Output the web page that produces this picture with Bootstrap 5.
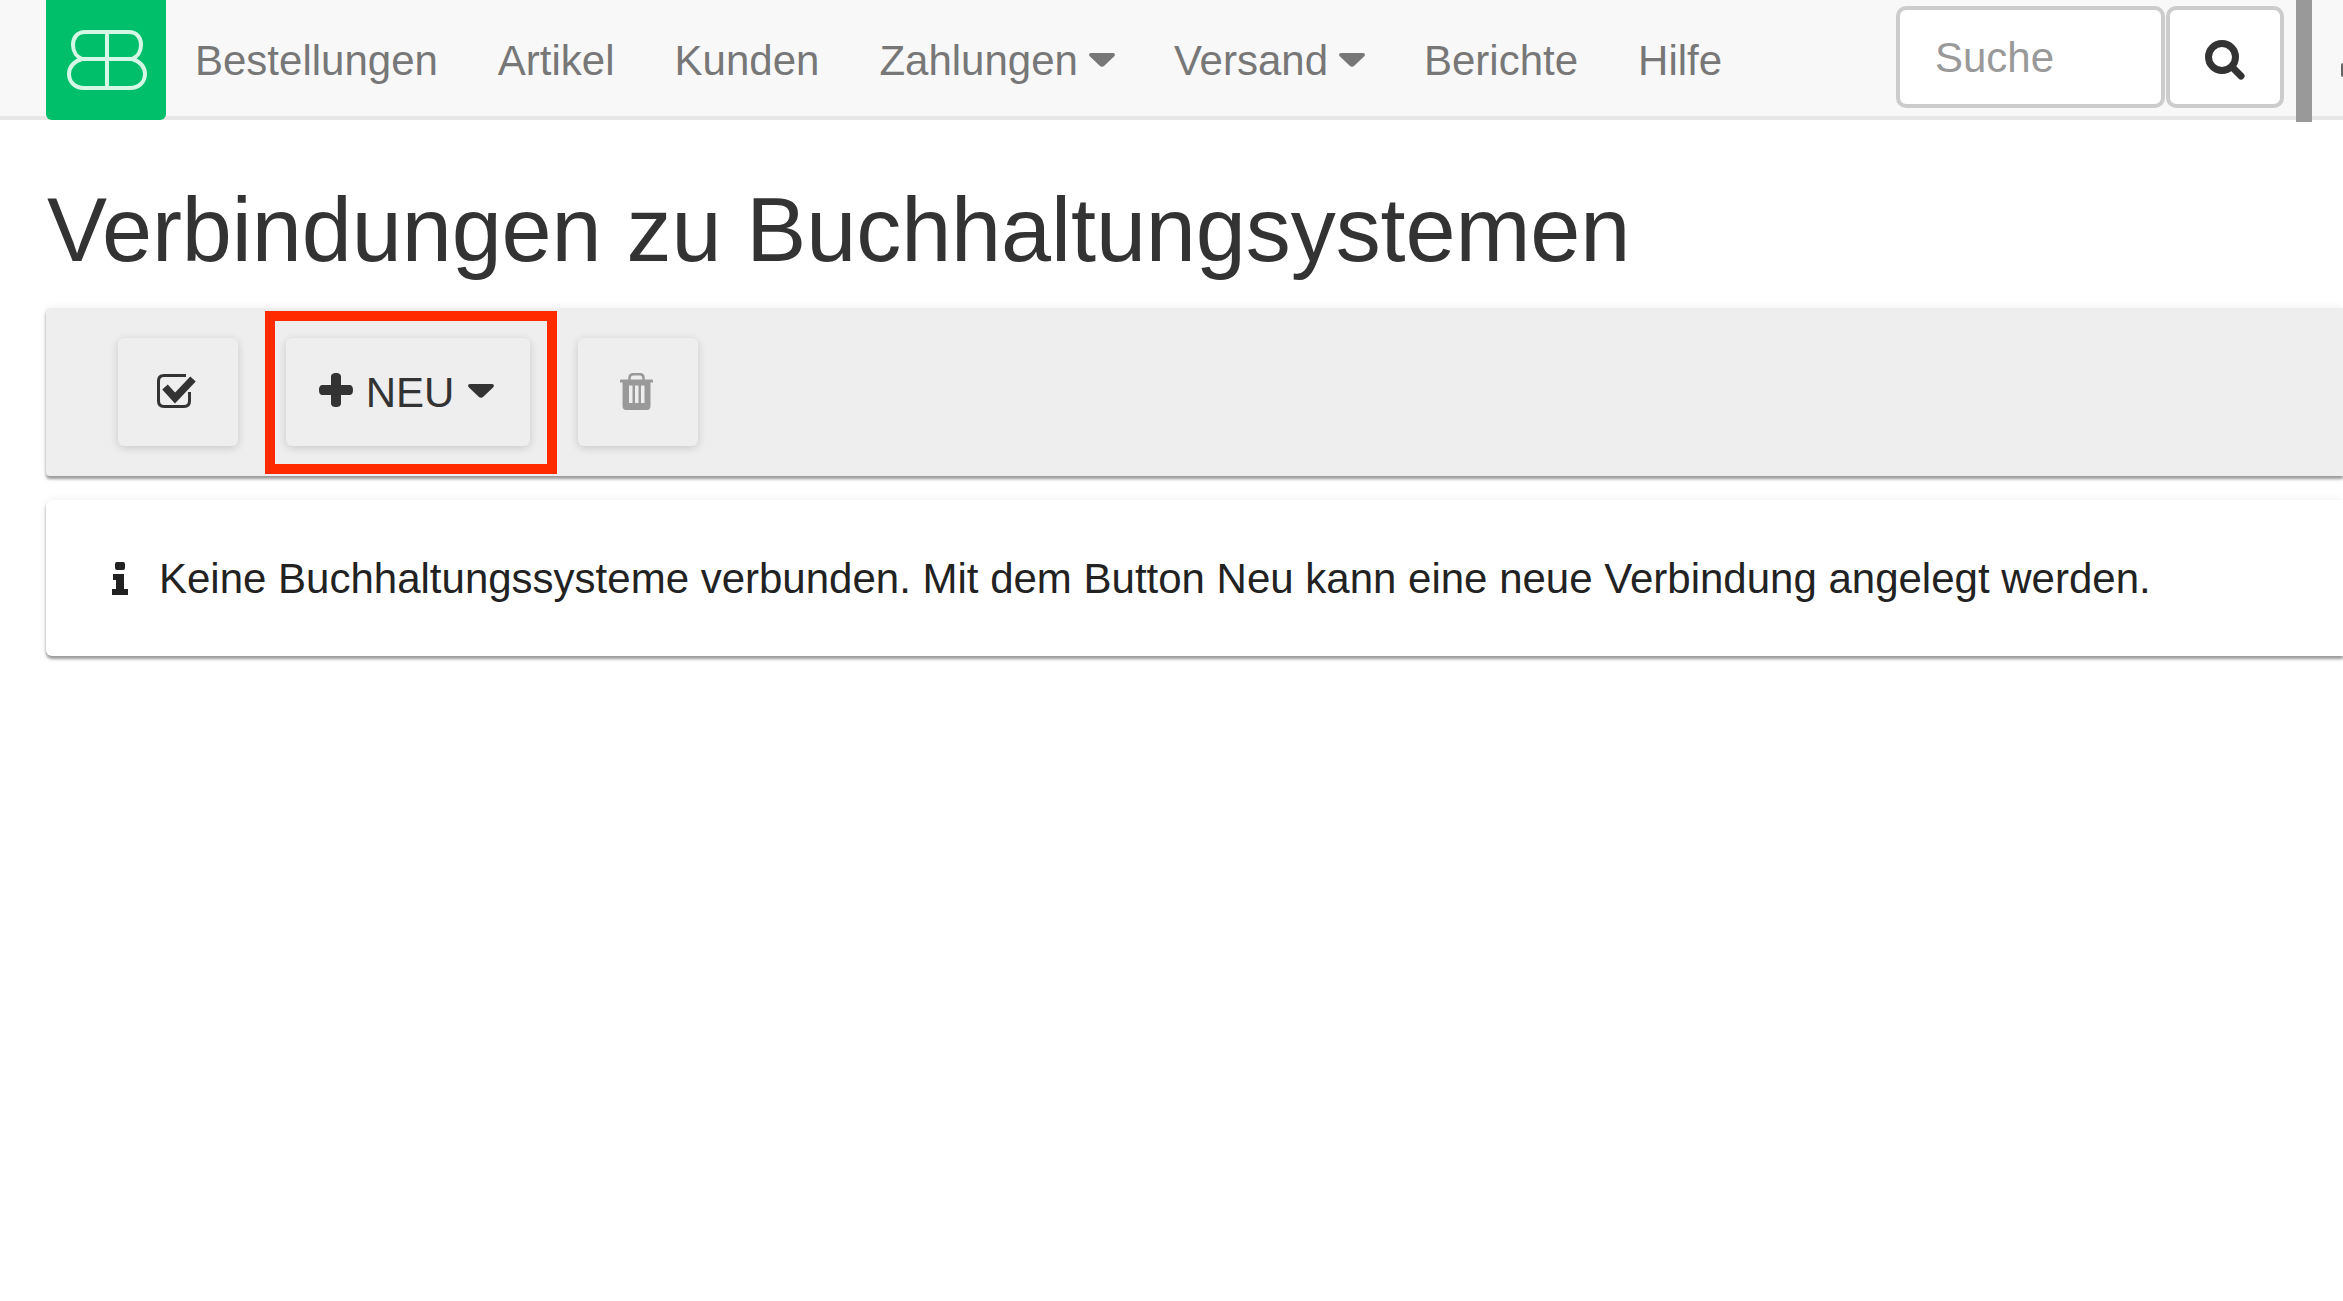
<!DOCTYPE html>
<html lang="de">
<head>
  <meta charset="UTF-8">
  <title>Verbindungen zu Buchhaltungssystemen</title>
  <link href="https://cdn.jsdelivr.net/npm/bootstrap@5.3.0/dist/css/bootstrap.min.css" rel="stylesheet">
  <style>
    html, body { height: 100%; overflow: hidden; }
    body { font-family: "Liberation Sans", Arial, sans-serif; color: #333; background: #fff; }

    /* Kopfzeile */
    .top-bar { height: 120px; background: #f8f8f8; border-bottom: 4px solid #e7e7e7; padding: 0 0 0 46px; align-items: flex-start; flex-wrap: nowrap; }
    .brand-box { width: 120px; height: 120px; flex: none; background: #00bf6b; border-radius: 0 0 6px 6px; padding-left: 2px; }
    .top-menu { margin-left: 29px; gap: 60px; height: 120px; align-items: center; font-size: 42px; }
    .top-menu a { color: #777; text-decoration: none; }
    .caret-icon { margin: 0 -1px 0 11px; vertical-align: 8px; }
    .search-box { margin-left: auto; padding-top: 6px; gap: 1px; }
    .search-input { width: 269px; height: 102px; border: 4px solid #ccc; border-radius: 10px; background: #fff; padding: 0 35px; font-size: 42px; color: #999; line-height: 96px; }
    .search-btn { width: 118px; height: 102px; border: 4px solid #ccc; border-radius: 10px; background: #fff; padding-top: 6px; }
    .side-handle { width: 16px; height: 122px; background: #999; margin: 0 29px 0 12px; flex: none; }
    .cut-glyph { width: 2px; height: 14px; margin-top: 63px; background: #666; border-radius: 2px 0 0 2px; flex: none; }

    /* Inhalt */
    .page-body { padding-left: 46px; }
    .page-title { font-size: 90px; font-weight: 400; color: #333; margin: 0; padding: 56px 0 0 1px; line-height: 108px; height: 188px; white-space: nowrap; letter-spacing: -.08px; }
    .tool-strip { height: 168px; background: #eee; border-radius: 4px 0 0 4px; box-shadow: 0 3px 3px rgba(0,0,0,.38), 0 0 10px rgba(0,0,0,.07); padding: 30px 0 0 72px; gap: 48px; align-items: flex-start; }
    .tool-btn { height: 108px; background: #eee; border-radius: 6px; box-shadow: 0 2px 8px rgba(0,0,0,.16); color: #333; flex: none; }
    .tool-btn-sq { width: 120px; }
    .tool-btn-sq svg { margin: 0 3px 2px 0; }
    .tool-btn-new { width: 244px; font-size: 42px; gap: 13px; padding-right: 3px; }
    .tool-btn-new svg:first-child { margin-bottom: 5px; }
    .tool-btn-new .caret-icon { margin: 0 0 3px 1px; vertical-align: 0; }
    .new-wrap { position: relative; }
    .red-frame { position: absolute; left: -21px; right: -27px; top: -27px; bottom: -28px; border: 10px solid #ff2a00; pointer-events: none; }
    .note-card { height: 156px; margin-top: 24px; background: #fff; border-radius: 6px 0 0 6px; box-shadow: 0 3px 3px rgba(0,0,0,.38), 0 0 10px rgba(0,0,0,.07); padding-left: 66px; font-size: 42px; color: #222; white-space: nowrap; }
    .note-card svg { flex: none; margin-right: 31px; }
  </style>
</head>
<body>
  <nav class="navbar top-bar">
    <div class="brand-box d-flex align-items-center justify-content-center">
      <svg width="80" height="60" viewBox="0 0 80 60" fill="none" stroke="#d5f7e6" stroke-width="4">
        <path d="M40 2H18C10 2 6 8 6 15C6 22 10 27 15 29C7 31 2 37 2 44C2 52 8 58 17 58H63C72 58 78 52 78 44C78 37 73 31 65 29C70 27 74 22 74 15C74 8 70 2 62 2H40V58M15 29H65"/>
      </svg>
    </div>
    <div class="d-flex top-menu">
      <a href="#">Bestellungen</a>
      <a href="#">Artikel</a>
      <a href="#">Kunden</a>
      <a href="#">Zahlungen<svg class="caret-icon" width="26" height="14" viewBox="0 0 26 14" fill="currentColor"><path d="M2 0H24C26 0 26.500 2 25 3.500L15 13C14 14 12 14 11 13L1 3.500C-.5 2 0 0 2 0Z"/></svg></a>
      <a href="#">Versand<svg class="caret-icon" width="26" height="14" viewBox="0 0 26 14" fill="currentColor"><path d="M2 0H24C26 0 26.500 2 25 3.500L15 13C14 14 12 14 11 13L1 3.500C-.5 2 0 0 2 0Z"/></svg></a>
      <a href="#">Berichte</a>
      <a href="#">Hilfe</a>
    </div>
    <div class="d-flex search-box">
      <div class="search-input">Suche</div>
      <div class="search-btn d-flex align-items-center justify-content-center">
        <svg width="40" height="40" viewBox="0 0 40 40" fill="none" stroke="#333">
          <circle cx="17" cy="17" r="13.500" stroke-width="7"/>
          <path d="M27 27L36 36" stroke-width="7" stroke-linecap="round"/>
        </svg>
      </div>
    </div>
    <div class="side-handle"></div>
    <div class="cut-glyph"></div>
  </nav>

  <div class="page-body">
    <h1 class="page-title">Verbindungen zu Buchhaltungsystemen</h1>

    <div class="d-flex tool-strip">
      <div class="tool-btn tool-btn-sq d-flex align-items-center justify-content-center">
        <svg width="39" height="34" viewBox="0 0 39 34" fill="none" stroke="#333">
          <path d="M29 1.500H7C3.500 1.500 1.500 3.500 1.500 7V27C1.500 30.500 3.500 32.500 7 32.500H27C30.500 32.500 32.500 30.500 32.500 27V18" stroke-width="3"/>
          <path d="M8 13L18 24L36 5" stroke-width="7.500"/>
        </svg>
      </div>
      <div class="new-wrap">
        <div class="tool-btn tool-btn-new d-flex align-items-center justify-content-center">
          <svg width="34" height="34" viewBox="0 0 34 34" fill="#333">
            <path d="M12 4C12 1 14 0 17 0C20 0 22 1 22 4V12H30C33 12 34 14 34 17C34 20 33 22 30 22H22V30C22 33 20 34 17 34C14 34 12 33 12 30V22H4C1 22 0 20 0 17C0 14 1 12 4 12H12Z"/>
          </svg>
          <span>NEU</span>
          <svg class="caret-icon" width="26" height="14" viewBox="0 0 26 14" fill="currentColor"><path d="M2 0H24C26 0 26.500 2 25 3.500L15 13C14 14 12 14 11 13L1 3.500C-.5 2 0 0 2 0Z"/></svg>
        </div>
        <div class="red-frame"></div>
      </div>
      <div class="tool-btn tool-btn-sq d-flex align-items-center justify-content-center">
        <svg width="33" height="37" viewBox="0 0 33 37" fill="#999">
          <path d="M9.500 7V5C9.500 2.500 11 1.200 13 1.200H20C22 1.200 23.500 2.500 23.500 5V7" fill="none" stroke="#999" stroke-width="2.500"/>
          <path d="M1 6.500H32C32.800 6.500 33 7 33 8V9.500H30.500V33C30.500 35.500 29 37 27 37H6C4 37 2.500 35.500 2.500 33V9.500H0V8C0 7 .2 6.500 1 6.500ZM9 12.500V30H12.500V12.500ZM15 12.500V30H18.500V12.500ZM21 12.500V30H24.500V12.500Z" fill-rule="evenodd"/>
        </svg>
      </div>
    </div>

    <div class="d-flex align-items-center note-card">
      <svg width="16" height="33" viewBox="0 0 16 33" fill="#222">
        <rect x="3" y="0" width="10" height="8" rx="2"/>
        <path d="M1 12H12V27H16V33H0V27H4V18H1Z"/>
      </svg>
      <span>Keine Buchhaltungssysteme verbunden. Mit dem Button Neu kann eine neue Verbindung angelegt werden.</span>
    </div>
  </div>

  <script src="https://cdn.jsdelivr.net/npm/bootstrap@5.3.0/dist/js/bootstrap.bundle.min.js"></script>
</body>
</html>
